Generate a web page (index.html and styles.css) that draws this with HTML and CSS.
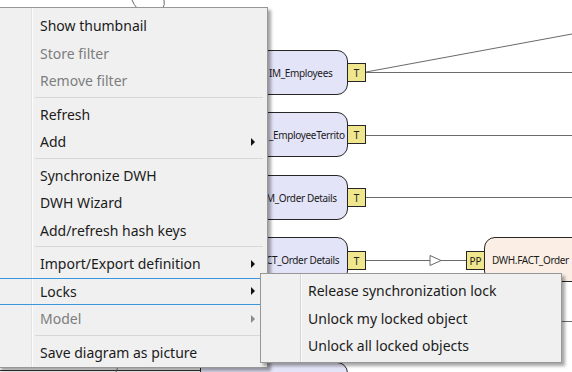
FILE: index.html
```html
<!DOCTYPE html>
<html>
<head>
<meta charset="utf-8">
<link rel="stylesheet" href="styles.css">
</head>
<body>
<div class="canvas">
  <svg class="wires" width="572" height="372" viewBox="0 0 572 372">
    <g fill="none" stroke="#6a6a6a" stroke-width="1">
      <path d="M366 72 L572 34"/>
      <path d="M366 72.5 H572"/>
      <path d="M366 135.5 H572"/>
      <path d="M366 197.5 H572"/>
      <path d="M366 260.5 H430"/>
      <path d="M430 255.5 L441 260.5 L430 265.5 Z"/>
      <path d="M441 260.5 H466"/>
      <path d="M540 321.5 H572"/>
      <path d="M132 0 Q134 5 137 8"/>
      <path d="M164 0 Q165 5 163 8"/>
      <path d="M0 370.5 H272" stroke="#333"/>
      <path d="M116 372 Q117 368 119 366"/>
      <path d="M215 366 V372"/>
    </g>
  </svg>

  <div class="node n1"><span class="label">IM_Employees</span></div>
  <div class="tag t1">T</div>
  <div class="node n2"><span class="label">_EmployeeTerrito</span></div>
  <div class="tag t2">T</div>
  <div class="node n3"><span class="label l3">M_Order Details</span></div>
  <div class="tag t3">T</div>
  <div class="node n4"><span class="label l4">CT_Order Details</span></div>
  <div class="tag t4">T</div>
  <div class="node n5"></div>
  <div class="tag pp">PP</div>
  <div class="fact"><span class="label">DWH.FACT_Order</span></div>
</div>

<div class="menu main">
  <div class="item">Show thumbnail</div>
  <div class="item disabled">Store filter</div>
  <div class="item disabled">Remove filter</div>
  <div class="sep"></div>
  <div class="item">Refresh</div>
  <div class="item sub">Add<span class="arrow"></span></div>
  <div class="sep"></div>
  <div class="item">Synchronize DWH</div>
  <div class="item">DWH Wizard</div>
  <div class="item">Add/refresh hash keys</div>
  <div class="sep"></div>
  <div class="item sub">Import/Export definition<span class="arrow"></span></div>
  <div class="item sub active">Locks<span class="arrow"></span></div>
  <div class="item sub disabled">Model<span class="arrow"></span></div>
  <div class="sep"></div>
  <div class="item">Save diagram as picture</div>
</div>

<div class="menu submenu">
  <div class="item">Release synchronization lock</div>
  <div class="item">Unlock my locked object</div>
  <div class="item">Unlock all locked objects</div>
</div>
</body>
</html>
```

FILE: styles.css
```css
html, body {
  margin: 0;
  padding: 0;
  background: #ffffff;
  overflow: hidden;
}

body {
  width: 572px;
  height: 372px;
  position: relative;
  font-family: "Noto Sans", "Open Sans", sans-serif;
}

.canvas {
  position: absolute;
  left: 0;
  top: 0;
  width: 572px;
  height: 372px;
  overflow: hidden;
}

.wires {
  position: absolute;
  left: 0;
  top: 0;
}

.node {
  position: absolute;
  left: 200px;
  width: 148px;
  background: #e4e4f8;
  border: 1px solid #262626;
  border-radius: 0 11px 11px 0;
  display: flex;
  align-items: center;
  padding-left: 68px;
  box-sizing: border-box;
}

.label {
  font-size: 10px;
  color: #1a1a1a;
  white-space: nowrap;
  letter-spacing: -0.35px;
}

.l3 { margin-left: -3px; }
.l4 { margin-left: -3px; }

.n1 { top: 50px; height: 45px; }
.n2 { top: 112px; height: 45px; }
.n3 { top: 175px; height: 45px; }
.n4 { top: 237px; height: 45px; }
.n5 { top: 362px; height: 30px; }

.tag {
  position: absolute;
  left: 347px;
  width: 19px;
  height: 19px;
  box-sizing: border-box;
  background: #efe68e;
  border: 1px solid #262626;
  font-size: 10px;
  color: #222;
  display: flex;
  align-items: center;
  justify-content: center;
}

.t1 { top: 63px; }
.t2 { top: 125px; }
.t3 { top: 188px; }
.t4 { top: 251px; }
.pp { top: 251px; left: 466px; }

.fact {
  position: absolute;
  left: 484px;
  top: 237px;
  width: 120px;
  height: 45px;
  box-sizing: border-box;
  background: #fbefe5;
  border: 1px solid #262626;
  border-radius: 11px 0 0 11px;
  display: flex;
  align-items: center;
  padding-left: 7px;
}

.menu {
  position: absolute;
  box-sizing: border-box;
  border: 1px solid #979797;
  box-shadow: 3px 3px 3px rgba(0, 0, 0, 0.35);
  display: flex;
  flex-direction: column;
  padding: 4px 0 1px;
  color: #1b1b1b;
  font-size: 14px;
}

.main {
  left: -2px;
  top: 7px;
  width: 270px;
  background: linear-gradient(to right, #f0f0f0 0 32px, #e3e3e3 32px 33px, #fcfcfc 33px 34px, #f0f0f0 34px);
}

.submenu {
  left: 260px;
  top: 273px;
  width: 302px;
  padding: 3px 0 2px;
  background: linear-gradient(to right, #f0f0f0 0 39px, #d4d4d4 39px 40px, #fcfcfc 40px 41px, #f0f0f0 41px);
}

.item {
  height: 27.5px;
  flex: none;
  box-sizing: border-box;
  display: flex;
  align-items: center;
  padding-left: 41px;
  position: relative;
  white-space: nowrap;
}

.submenu .item {
  padding-left: 47px;
}

.disabled {
  color: #7d7d7d;
}

.active {
  border-top: 1px solid #3a96dd;
  border-bottom: 1px solid #3a96dd;
}

.arrow {
  position: absolute;
  left: 252px;
  top: 50%;
  margin-top: -4px;
  width: 0;
  height: 0;
  border-top: 4px solid transparent;
  border-bottom: 4px solid transparent;
  border-left: 4px solid #111;
}

.disabled .arrow {
  border-left-color: #8a8a8a;
}

.sep {
  height: 6px;
  flex: none;
  margin: 0 4px 0 36px;
  background: linear-gradient(#d7d7d7, #d7d7d7) no-repeat 0 2px / 100% 1px;
}
```
